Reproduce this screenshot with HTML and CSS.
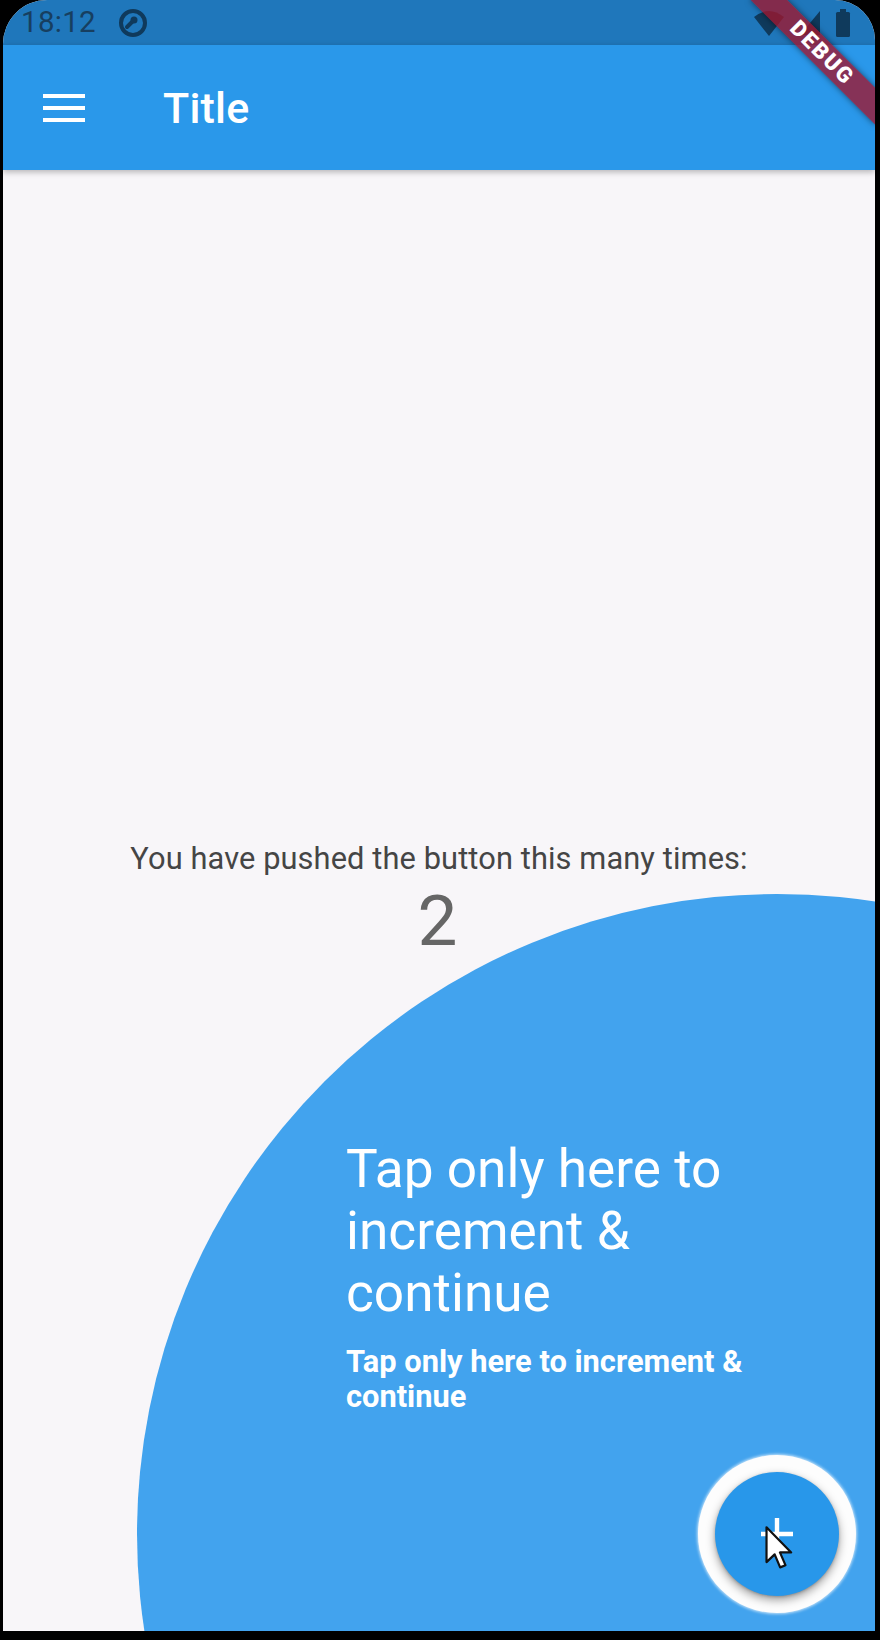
FILE: index.html
```html
<!DOCTYPE html>
<html lang="en">
<head>
<meta charset="utf-8">
<title>Title</title>
<link rel="stylesheet" href="styles.css">
</head>
<body>
<div class="screen">
  <div class="statusbar">
    <span class="time">18:12</span>
    <svg class="sb-icon" width="32" height="32" viewBox="0 0 32 32">
      <circle cx="16" cy="16" r="12" fill="none" stroke="#0f3a5c" stroke-width="4"/>
      <path d="M10 20 L16 14" stroke="#0f3a5c" stroke-width="4" stroke-linecap="round"/>
      <circle cx="17" cy="13" r="3.5" fill="#0f3a5c"/>
    </svg>
    <span class="sb-spacer"></span>
    <svg class="sb-wifi" width="32" height="28" viewBox="0 0 32 28">
      <path d="M1 8 Q16 -4 31 8 L16 27 Z" fill="#0f3a5c"/>
    </svg>
    <svg class="sb-signal" width="22" height="26" viewBox="0 0 22 26">
      <path d="M21 1 L21 25 L1 25 Z" fill="#0f3a5c"/>
    </svg>
    <svg class="sb-battery" width="16" height="28" viewBox="0 0 16 28">
      <rect x="5" y="0" width="6" height="3" fill="#0f3a5c"/>
      <rect x="1" y="3" width="14" height="25" rx="1.5" fill="#0f3a5c"/>
    </svg>
  </div>
  <header class="appbar">
    <span class="menu" aria-label="menu"><i></i><i></i><i></i></span>
    <h1 class="title">Title</h1>
  </header>
  <main class="content">
    <p class="label">You have pushed the button this many times:</p>
    <p class="count">2</p>
  </main>

  <div class="spotlight"></div>
  <div class="coach">
    <p class="coach-title">Tap only here to increment &amp; continue</p>
    <p class="coach-sub">Tap only here to increment &amp; continue</p>
  </div>
  <div class="fab-ring">
    <button class="fab" aria-label="Increment">
      <svg width="36" height="36" viewBox="0 0 36 36">
        <path d="M18 2 V34 M2 18 H34" stroke="#fff" stroke-width="4.4"/>
      </svg>
    </button>
  </div>
  <svg class="cursor" width="29" height="44" viewBox="0 0 13 20">
    <path d="M0.6 0.6 L0.6 16.4 L4.3 12.9 L6.8 18.8 L9.2 17.8 L6.7 12 L11.8 12 Z" fill="#fff" stroke="#111" stroke-width="1" stroke-linejoin="round"/>
  </svg>
  <div class="debug-banner">DEBUG</div>
</div>
</body>
</html>
```

FILE: styles.css
```css
html, body {
  margin: 0;
  padding: 0;
  background: #000;
}
body {
  width: 880px;
  height: 1640px;
  overflow: hidden;
  font-family: Roboto, "Noto Sans", "Liberation Sans", sans-serif;
}
.screen {
  position: relative;
  margin-left: 3px;
  width: 872px;
  height: 1631px;
  background: #f8f6f9;
  border-radius: 44px 40px 0 0;
  overflow: hidden;
  display: flex;
  flex-direction: column;
}
.statusbar {
  height: 45px;
  background: #1f77bb;
  display: flex;
  align-items: center;
  padding: 0 24px 0 18px;
  flex-shrink: 0;
}
.time {
  font-size: 29.5px;
  color: #173f60;
  letter-spacing: 0.3px;
  line-height: 1;
}
.sb-icon {
  margin-left: 21px;
}
.sb-spacer {
  flex: 1;
}
.sb-wifi { margin-right: 14px; }
.sb-signal { margin-right: 14px; }
.appbar {
  height: 125px;
  background: #2a98ea;
  display: flex;
  align-items: center;
  padding-left: 40px;
  flex-shrink: 0;
  position: relative;
  z-index: 1;
  box-shadow: 0 2px 6px rgba(0,0,0,0.28);
}
.menu {
  display: flex;
  flex-direction: column;
  gap: 8px;
  width: 42px;
}
.menu i {
  display: block;
  height: 4px;
  background: #fff;
}
.title {
  margin: 0 0 0 78px;
  font-size: 43px;
  font-weight: 500;
  color: #fff;
  letter-spacing: 0.2px;
}
.content {
  flex: 1;
  display: flex;
  flex-direction: column;
  align-items: center;
  justify-content: center;
  padding-bottom: 4px;
}
.label {
  margin: 0;
  font-size: 30.8px;
  line-height: 44px;
  color: #454545;
  letter-spacing: 0.1px;
}
.count {
  margin: 0;
  font-size: 71px;
  line-height: 80px;
  color: #666;
  margin-left: -3px;
}
.spotlight {
  position: absolute;
  left: 134px;
  top: 894px;
  width: 1280px;
  height: 1280px;
  border-radius: 50%;
  background: #42a3ee;
}
.coach {
  position: absolute;
  left: 343px;
  top: 1138px;
  width: 430px;
  color: #fff;
}
.coach-title {
  margin: 0;
  font-size: 53.2px;
  line-height: 62px;
  font-weight: 400;
}
.coach-sub {
  margin: 20px 0 0;
  font-size: 30.8px;
  line-height: 35px;
  font-weight: 700;
}
.fab-ring {
  position: absolute;
  left: 695px;
  top: 1455px;
  width: 158px;
  height: 158px;
  border-radius: 50%;
  background: #fdfdfd;
  box-shadow: 0 0 3px 1px rgba(255,255,255,0.7);
  display: flex;
  align-items: center;
  justify-content: center;
}
.fab {
  width: 124px;
  height: 124px;
  border-radius: 50%;
  border: none;
  padding: 0;
  background: #2897ea;
  box-shadow: 0 4px 10px rgba(0,0,0,0.38), 0 1px 3px rgba(0,0,0,0.2);
  display: flex;
  align-items: center;
  justify-content: center;
}
.cursor {
  position: absolute;
  left: 762px;
  top: 1526px;
}
.debug-banner {
  position: absolute;
  z-index: 10;
  left: 731px;
  top: 40px;
  width: 176px;
  height: 26px;
  background: rgba(160, 22, 45, 0.78);
  box-shadow: 0 0 6px rgba(0,0,0,0.5);
  transform: rotate(45deg);
  color: #fff;
  font-family: Roboto, "Liberation Sans", sans-serif;
  font-weight: 900;
  font-size: 22px;
  line-height: 26px;
  text-align: center;
  letter-spacing: 2px;
}
```
